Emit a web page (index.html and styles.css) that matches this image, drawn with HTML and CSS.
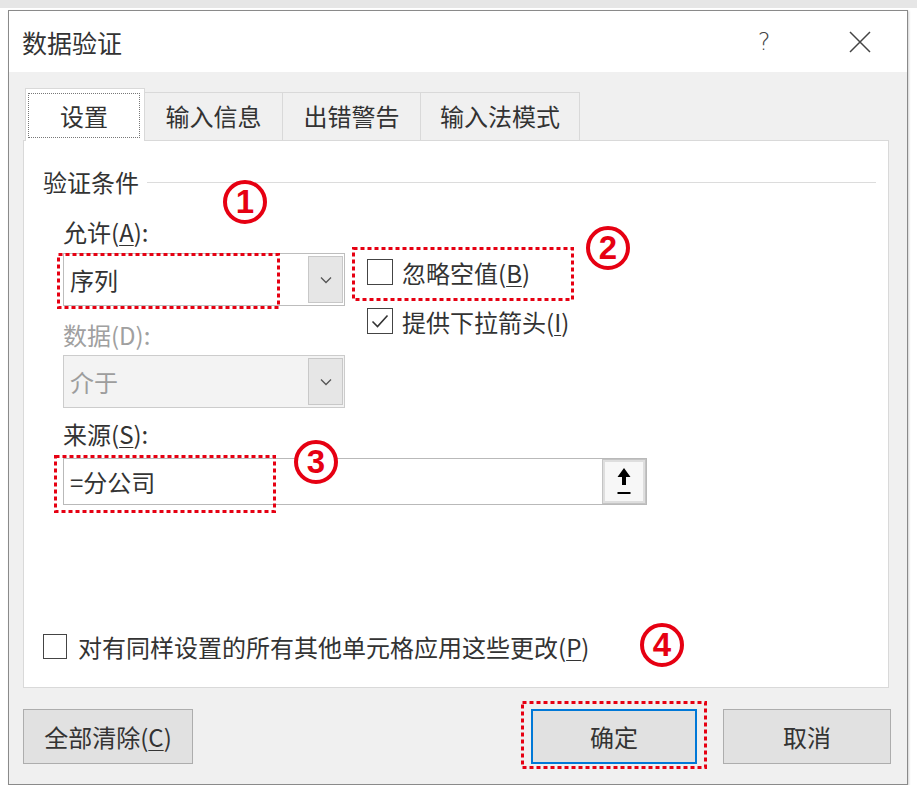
FILE: index.html
```html
<!DOCTYPE html>
<html lang="zh-CN">
<head>
<meta charset="utf-8">
<title>数据验证</title>
<link rel="stylesheet" href="styles.css">
</head>
<body>
<div class="dialog">
  <div class="titlebar">
    <div class="title">数据验证</div>
    <div class="help">?</div>
    <svg class="close" width="22" height="22" viewBox="0 0 22 22"><path d="M1 1L21 21M21 1L1 21"/></svg>
  </div>
  <div class="content">
    <div class="tabs">
      <div class="tab active"><span class="focus">设置</span></div>
      <div class="tab t2">输入信息</div>
      <div class="tab t3">出错警告</div>
      <div class="tab t4">输入法模式</div>
    </div>
    <div class="panel">
      <div class="group-title"><span>验证条件</span></div>
      <div class="form">
        <div class="label">允许(<u>A</u>):</div>
        <div class="row">
          <div class="col">
            <div class="combo"><span class="combo-text">序列</span><span class="drop"><svg width="12" height="8" viewBox="0 0 12 8"><path d="M1 1.5L6 6.5L11 1.5"/></svg></span></div>
            <div class="label muted label-data">数据(D):</div>
            <div class="combo disabled"><span class="combo-text">介于</span><span class="drop"><svg width="12" height="8" viewBox="0 0 12 8"><path d="M1 1.5L6 6.5L11 1.5"/></svg></span></div>
          </div>
          <div class="checks">
            <div class="check"><span class="box"></span><span>忽略空值(<u>B</u>)</span></div>
            <div class="check check2"><span class="box"><svg width="24" height="24" viewBox="0 0 24 24"><path d="M4.5 12.5L9.5 17.5L19.5 6.5"/></svg></span><span>提供下拉箭头(<u>I</u>)</span></div>
          </div>
        </div>
        <div class="label label-src">来源(<u>S</u>):</div>
        <div class="source"><span class="source-text">=分公司</span><span class="ref-btn"><svg width="14" height="27" viewBox="0 0 14 27"><path class="fill" d="M7 0L13.5 9H9V17H5V9H0.5Z"/><rect class="fill" x="0.5" y="24" width="13" height="2"/></svg></span></div>
      </div>
      <div class="apply"><span class="box"></span><span>对有同样设置的所有其他单元格应用这些更改(<u>P</u>)</span></div>
    </div>
    <div class="footer">
      <button class="btn clear">全部清除(<u>C</u>)</button>
      <span class="spacer"></span>
      <button class="btn ok">确定</button>
      <button class="btn cancel">取消</button>
    </div>
  </div>
</div>

<svg class="mark mark1" width="223" height="56"><rect x="1.5" y="1.5" width="220" height="53"/></svg>
<svg class="mark mark2" width="222" height="54"><rect x="1.5" y="1.5" width="219" height="51"/></svg>
<svg class="mark mark3" width="222" height="58"><rect x="1.5" y="1.5" width="219" height="55"/></svg>
<svg class="mark mark4" width="186" height="68"><rect x="1.5" y="1.5" width="183" height="65"/></svg>

<div class="num num1">1</div>
<div class="num num2">2</div>
<div class="num num3">3</div>
<div class="num num4">4</div>
</body>
</html>
```

FILE: styles.css
```css
* { box-sizing: border-box; }

html { background: #ffffff; }

body {
  margin: 0;
  border-top: 8px solid #e6e6e6;
  padding: 2px 0 0 8px;
  font-family: "Noto Sans CJK SC", "Noto Sans", sans-serif;
  font-size: 24px;
  color: #333333;
}

u { text-decoration: underline; text-underline-offset: 3px; text-decoration-thickness: 1px; }

.dialog {
  width: 900px;
  height: 775px;
  border: 1px solid #8a8a8a;
  box-shadow: 1px 1px 2px rgba(0,0,0,0.18);
  display: flex;
  flex-direction: column;
  background: #f0f0f0;
}

.titlebar {
  height: 61px;
  background: #ffffff;
  display: flex;
  align-items: center;
  padding: 0 36px 0 13px;
  flex: none;
}

.title { font-size: 25px; line-height: 34px; color: #333; }

.help {
  margin-left: auto;
  width: 40px;
  text-align: center;
  font-family: "DejaVu Sans", sans-serif;
  font-size: 24px;
  font-weight: 300;
  color: #444;
  line-height: 34px;
}

.close { margin-left: 65px; }
.close path { stroke: #444; stroke-width: 1.5; fill: none; }

.content {
  flex: 1;
  display: flex;
  flex-direction: column;
  padding: 0 18px 0 14px;
}

.tabs {
  margin-top: 16px;
  height: 52px;
  display: flex;
  align-items: flex-end;
  position: relative;
  z-index: 1;
}

.tab {
  height: 48px;
  border: 1px solid #d9d9d9;
  border-bottom: none;
  margin-left: -1px;
  text-align: center;
  line-height: 46px;
  background: #f0f0f0;
  white-space: nowrap;
}

.tab.active {
  width: 120px;
  height: 53px;
  margin-left: 2px;
  margin-bottom: -1px;
  background: #ffffff;
  padding: 4px 4px 0 2px;
}

.focus {
  display: block;
  height: 45px;
  line-height: 43px;
  border: 1px dotted #777;
}

.t2 { width: 139px; }
.t3 { width: 139px; }
.t4 { width: 160px; }

.panel {
  width: 866px;
  height: 548px;
  background: #ffffff;
  border: 1px solid #d9d9d9;
  display: flex;
  flex-direction: column;
}

.group-title {
  margin-top: 24px;
  height: 34px;
  line-height: 34px;
  padding-left: 19px;
  display: flex;
  align-items: center;
}
.group-title::after {
  content: "";
  flex: 1;
  height: 1px;
  background: #dcdcdc;
  margin: 0 12px 0 8px;
}

.form { padding-left: 39px; }

.label { height: 34px; line-height: 34px; margin-top: 16px; }
.label.muted { color: #a0a0a0; }
.label-data { margin-top: 12px; }
.label-src { margin-top: 9px; }

.row { display: flex; margin-top: 4px; }
.col { width: 282px; }

.combo {
  height: 53px;
  border: 1px solid #bdbdbd;
  background: #ffffff;
  display: flex;
  align-items: center;
}
.combo.disabled {
  margin-top: 3px;
  background: #f3f3f3;
  border-color: #cccccc;
  color: #9d9d9d;
}
.combo-text { padding-left: 6px; flex: 1; }

.drop {
  align-self: stretch;
  width: 35px;
  margin: 2px 1px 2px 0;
  background: #e6e6e6;
  border: 1px solid #c8c8c8;
  display: flex;
  align-items: center;
  justify-content: center;
}
.drop path { stroke: #555; stroke-width: 1.3; fill: none; }

.checks { margin-left: 22px; }
.check {
  height: 38px;
  display: flex;
  align-items: center;
  white-space: nowrap;
}
.check2 { margin-top: 11px; }

.box {
  width: 26px;
  height: 26px;
  border: 1px solid #444;
  background: #ffffff;
  margin-right: 9px;
  flex: none;
  display: flex;
  align-items: center;
  justify-content: center;
}
.box path { stroke: #333; stroke-width: 1.6; fill: none; }

.source {
  margin-top: 7px;
  width: 584px;
  height: 47px;
  border: 1px solid #b9b9b9;
  display: flex;
  align-items: center;
}
.source-text { padding-left: 6px; flex: 1; }

.ref-btn {
  align-self: stretch;
  width: 44px;
  margin: 0 0 0 0;
  background: #f7f7f7;
  border: 1px solid #c4c4c4;
  box-shadow: inset 0 0 0 2px #dedede;
  display: flex;
  align-items: center;
  justify-content: center;
}
.ref-btn .fill { fill: #000; }

.apply {
  margin-top: auto;
  margin-bottom: 24px;
  height: 34px;
  padding-left: 19px;
  display: flex;
  align-items: center;
  white-space: nowrap;
}
.apply .box { width: 24px; height: 25px; margin-right: 11px; }

.footer {
  margin-top: 21px;
  margin-right: -2px;
  display: flex;
}
.spacer { flex: 1; }

.btn {
  height: 55px;
  font-family: inherit;
  font-size: 24px;
  color: #333;
  background: #e1e1e1;
  border: 1px solid #adadad;
  padding: 0;
}
.clear { width: 170px; }
.ok { width: 166px; border-color: #0078d7; box-shadow: inset 0 0 0 1px #0078d7; }
.cancel { width: 168px; margin-left: 26px; }

/* annotations */
.mark { position: absolute; }
.mark rect { fill: none; stroke: #e60012; stroke-width: 3; stroke-dasharray: 4 3; }
.mark1 { left: 57px; top: 253px; }
.mark2 { left: 352px; top: 247px; }
.mark3 { left: 54px; top: 455px; }
.mark4 { left: 521px; top: 701px; }

.num {
  position: absolute;
  width: 44px;
  height: 44px;
  border: 4px solid #e60012;
  border-radius: 50%;
  background: #ffffff;
  color: #e60012;
  font-family: "Liberation Sans", Arial, sans-serif;
  font-weight: bold;
  font-size: 33px;
  line-height: 36px;
  text-align: center;
}
.num1 { left: 223px; top: 180px; }
.num2 { left: 586px; top: 226px; }
.num3 { left: 294px; top: 440px; }
.num4 { left: 640px; top: 623px; }
```
